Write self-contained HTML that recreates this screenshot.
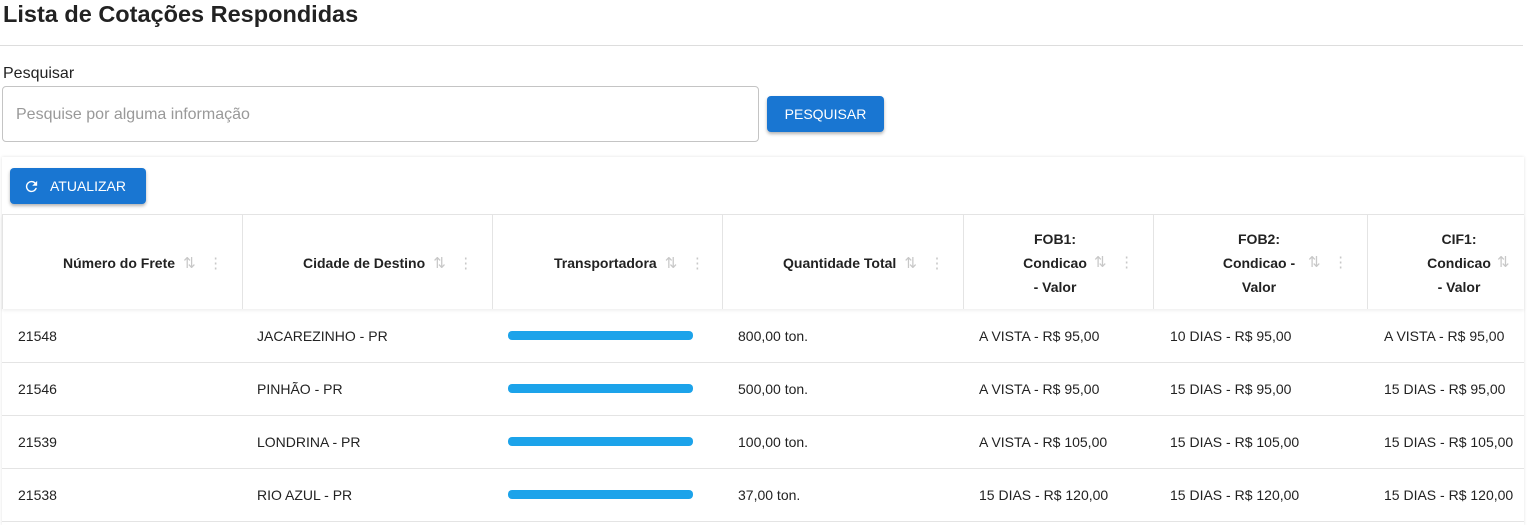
<!DOCTYPE html><html><head><style>
body{margin:0;width:1528px;height:525px;overflow:hidden;background:#fff;font-family:"Liberation Sans",Arial,sans-serif;color:#222;position:relative}
.a{position:absolute}
h1{position:absolute;left:3px;top:0;margin:0;font-size:23.5px;font-weight:bold;line-height:28px;color:#222}
.hd{font-size:14px;font-weight:bold;color:#222;line-height:24px;text-align:center}
.ic{color:#c8c8c8;font-size:15px;font-weight:normal}
.cell{font-size:14px;color:#222}
.red{position:absolute;height:9px;background:#1ca3ea;border-radius:4px;left:508px;width:185px}
.vl{position:absolute;top:215px;height:94px;width:1px;background:#e4e4e4}
.hl{position:absolute;left:2px;width:1522px;height:1px;background:#e4e4e4}
</style></head><body>
<h1>Lista de Cotações Respondidas</h1>
<div class="a" style="left:0;top:45px;width:1523px;height:1px;background:#ddd"></div>
<div class="a" style="left:3px;top:65px;font-size:16px">Pesquisar</div>
<div class="a" style="left:2px;top:86px;width:755px;height:54px;border:1px solid #c4c4c4;border-radius:4px"></div>
<div class="a" style="left:16px;top:106px;font-size:16px;color:#999">Pesquise por alguma informação</div>
<div class="a" style="left:767px;top:96px;width:117px;height:36px;background:#1976d2;border-radius:4px;box-shadow:0 2px 3px rgba(0,0,0,.3);color:#fff;font-size:14px;line-height:36px;text-align:center">PESQUISAR</div>
<div class="a" style="left:2px;top:157px;width:1522px;height:368px;box-shadow:0 0 3px rgba(0,0,0,.12)"></div>
<div class="a" style="left:10px;top:168px;width:136px;height:36px;background:#1976d2;border-radius:4px;box-shadow:0 2px 3px rgba(0,0,0,.3);color:#fff;font-size:14px;line-height:36px">
<svg class="a" style="left:13px;top:10px" width="17" height="17" viewBox="0 0 24 24"><path fill="#fff" d="M17.65 6.35A7.96 7.96 0 0 0 12 4a8 8 0 1 0 7.73 10h-2.08A6 6 0 1 1 12 6c1.66 0 3.14.69 4.22 1.78L13 11h7V4l-2.35 2.35z"/></svg>
<span class="a" style="left:40px">ATUALIZAR</span></div>
<div class="hl" style="top:214px"></div>
<div class="a" style="left:2px;top:215px;width:1522px;height:94px;box-shadow:0 2px 3px rgba(0,0,0,.06)"></div>
<div class="vl" style="left:2px"></div><div class="vl" style="left:242px"></div><div class="vl" style="left:492px"></div><div class="vl" style="left:722px"></div><div class="vl" style="left:963px"></div><div class="vl" style="left:1153px"></div><div class="vl" style="left:1367px"></div>
<div class="a hd" style="left:63px;top:251px">Número do Frete <span class="ic">&nbsp;⇅ &nbsp;&nbsp;⋮</span></div>
<div class="a hd" style="left:303px;top:251px">Cidade de Destino <span class="ic">&nbsp;⇅ &nbsp;&nbsp;⋮</span></div>
<div class="a hd" style="left:554px;top:251px">Transportadora <span class="ic">&nbsp;⇅ &nbsp;&nbsp;⋮</span></div>
<div class="a hd" style="left:783px;top:251px">Quantidade Total <span class="ic">&nbsp;⇅ &nbsp;&nbsp;⋮</span></div>
<div class="a hd" style="left:1012px;top:227px;width:86px">FOB1:<br>Condicao<br>- Valor</div><div class="a ic" style="left:1094px;top:253px">⇅ &nbsp;&nbsp;⋮</div>
<div class="a hd" style="left:1210px;top:227px;width:98px">FOB2:<br>Condicao -<br>Valor</div><div class="a ic" style="left:1308px;top:253px">⇅ &nbsp;&nbsp;⋮</div>
<div class="a hd" style="left:1416px;top:227px;width:86px">CIF1:<br>Condicao<br>- Valor</div><div class="a ic" style="left:1497px;top:253px">⇅</div>
<div class="hl" style="top:362px"></div><div class="hl" style="top:415px"></div><div class="hl" style="top:468px"></div><div class="hl" style="top:521px"></div>
<div class="a cell" style="left:18px;top:328px">21548</div><div class="a cell" style="left:257px;top:328px">JACAREZINHO - PR</div><div class="red" style="top:331px"></div><div class="a cell" style="left:738px;top:328px">800,00 ton.</div><div class="a cell" style="left:979px;top:328px">A VISTA - R$ 95,00</div><div class="a cell" style="left:1170px;top:328px">10 DIAS - R$ 95,00</div><div class="a cell" style="left:1384px;top:328px">A VISTA - R$ 95,00</div>
<div class="a cell" style="left:18px;top:381px">21546</div><div class="a cell" style="left:257px;top:381px">PINHÃO - PR</div><div class="red" style="top:384px"></div><div class="a cell" style="left:738px;top:381px">500,00 ton.</div><div class="a cell" style="left:979px;top:381px">A VISTA - R$ 95,00</div><div class="a cell" style="left:1170px;top:381px">15 DIAS - R$ 95,00</div><div class="a cell" style="left:1384px;top:381px">15 DIAS - R$ 95,00</div>
<div class="a cell" style="left:18px;top:434px">21539</div><div class="a cell" style="left:257px;top:434px">LONDRINA - PR</div><div class="red" style="top:437px"></div><div class="a cell" style="left:738px;top:434px">100,00 ton.</div><div class="a cell" style="left:979px;top:434px">A VISTA - R$ 105,00</div><div class="a cell" style="left:1170px;top:434px">15 DIAS - R$ 105,00</div><div class="a cell" style="left:1384px;top:434px">15 DIAS - R$ 105,00</div>
<div class="a cell" style="left:18px;top:487px">21538</div><div class="a cell" style="left:257px;top:487px">RIO AZUL - PR</div><div class="red" style="top:490px"></div><div class="a cell" style="left:738px;top:487px">37,00 ton.</div><div class="a cell" style="left:979px;top:487px">15 DIAS - R$ 120,00</div><div class="a cell" style="left:1170px;top:487px">15 DIAS - R$ 120,00</div><div class="a cell" style="left:1384px;top:487px">15 DIAS - R$ 120,00</div>
</body></html>
